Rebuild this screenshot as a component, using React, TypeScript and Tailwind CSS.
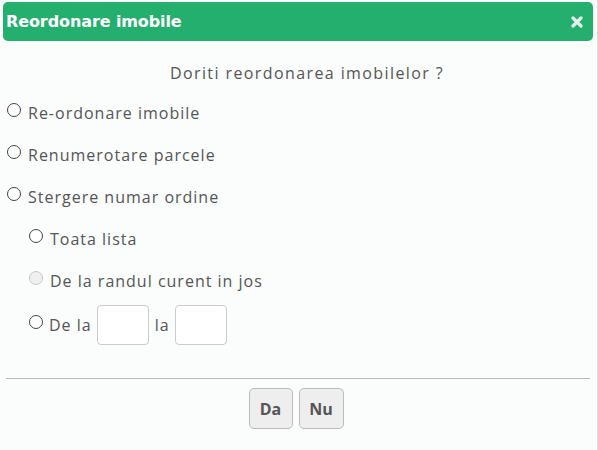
function Radio({ disabled = false }: { disabled?: boolean }) {
  return (
    <span
      className={
        disabled
          ? "inline-block w-[14px] h-[14px] rounded-full border border-[#c8c8c8] bg-[#f0f0f0] shrink-0"
          : "inline-block w-[14px] h-[14px] rounded-full border border-[#444] bg-white shrink-0"
      }
    />
  );
}

function Option({ label, disabled = false }: { label: string; disabled?: boolean }) {
  return (
    <label className="flex items-center gap-[7px] h-[42px]">
      <Radio disabled={disabled} />
      <span className="mt-[5px]">{label}</span>
    </label>
  );
}

export default function App() {
  return (
    <main
      className="w-[598px] h-[450px] bg-[#fbfcfc] text-[#555] text-[16px] tracking-[1px] border-r border-[#ddd] pt-[2px] pl-[3px] pr-[4px]"
      style={{ fontFamily: '"Open Sans", "DejaVu Sans", sans-serif' }}
    >
      {/* Header */}
      <div className="flex items-center justify-between h-[39px] bg-[#24af6f] rounded-[5px] pl-[3px] pr-[10px]">
        <h1
          className="text-white font-bold text-[16px] tracking-[-0.1px]"
          style={{ fontFamily: '"DejaVu Sans", sans-serif' }}
        >
          Reordonare imobile
        </h1>
        <svg width="12" height="12" viewBox="0 0 12 12">
          <path d="M2 2 L10 10 M10 2 L2 10" stroke="#e2f1eb" strokeWidth="3.2" strokeLinecap="round" />
        </svg>
      </div>

      {/* Body */}
      <div className="pl-[4px]">
        <p className="text-center mt-[20px] ml-[14px] h-[21px] tracking-[1.4px]">Doriti reordonarea imobilelor ?</p>
        <div className="mt-[7px] flex flex-col">
          <Option label="Re-ordonare imobile" />
          <Option label="Renumerotare parcele" />
          <Option label="Stergere numar ordine" />
          <div className="pl-[22px] flex flex-col">
            <Option label="Toata lista" />
            <Option label="De la randul curent in jos" disabled />
            <label className="flex items-center gap-[6px] h-[46px]">
              <Radio />
              <span className="mt-[5px]">De la</span>
              <input className="w-[52px] h-[40px] bg-white border border-[#ccc] rounded-[4px] mt-[6px] -ml-[1px]" />
              <span className="mt-[5px]">la</span>
              <input className="w-[52px] h-[40px] bg-white border border-[#ccc] rounded-[4px] mt-[6px] -ml-[1px]" />
            </label>
          </div>
        </div>
      </div>

      {/* Footer */}
      <div className="mx-[3px] mt-[33px] border-t border-[#bbb] flex justify-center gap-[6px] pt-[9px] pr-[4px]">
        <button className="w-[44px] h-[41px] bg-[#eee] border border-[#bbb] rounded-[5px] font-bold text-[#555] text-[16px] tracking-normal">
          Da
        </button>
        <button className="w-[45px] h-[41px] bg-[#eee] border border-[#bbb] rounded-[5px] font-bold text-[#555] text-[16px] tracking-normal">
          Nu
        </button>
      </div>
    </main>
  );
}
